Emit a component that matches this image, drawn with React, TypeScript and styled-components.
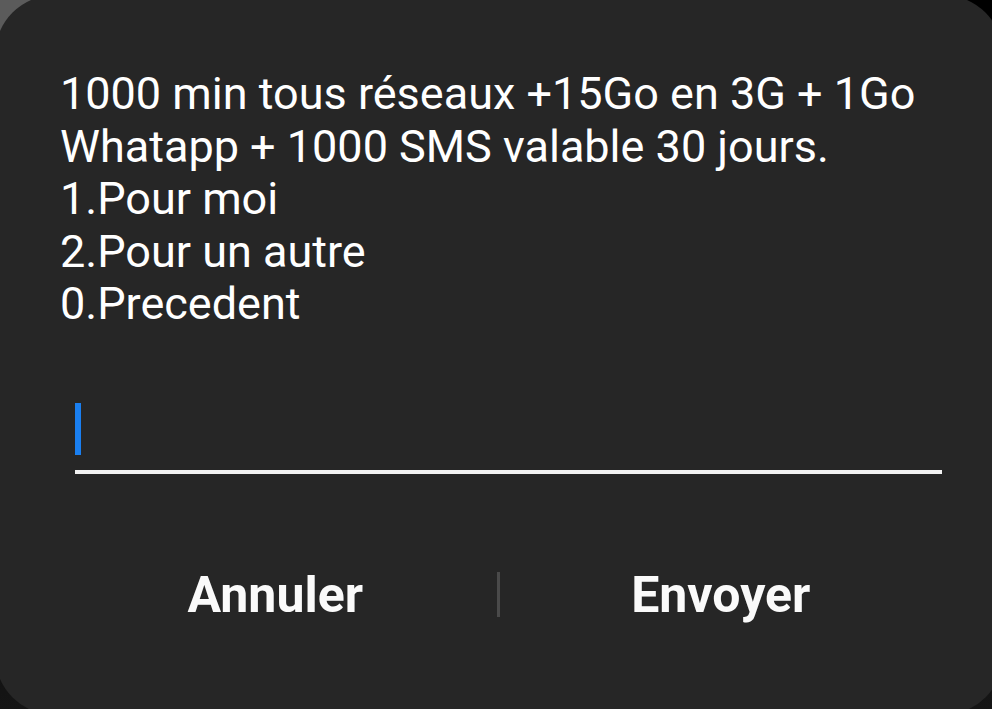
import React from "react";
import styled, { createGlobalStyle } from "styled-components";

const Global = createGlobalStyle`
  html, body {
    margin: 0;
    padding: 0;
    width: 100%;
    height: 100%;
    overflow: hidden;
  }
  body {
    background:
      radial-gradient(circle at 0 0, #5b5b5b 0, #5b5b5b 60px, transparent 61px),
      linear-gradient(to bottom, #000 0%, #000 50%, #151515 100%);
    font-family: Roboto, "Noto Sans", "Liberation Sans", sans-serif;
  }
`;

const Screen = styled.div`
  width: 992px;
  height: 709px;
  position: relative;
  overflow: hidden;
`;

const Dialog = styled.div`
  margin: -5px 0 0 -5px;
  width: 1008px;
  height: 720px;
  box-sizing: border-box;
  background: #262626;
  border-radius: 60px;
  padding: 73px 61px 0 65px;
  display: flex;
  flex-direction: column;
`;

const Message = styled.div`
  color: #ffffff;
  font-size: 45px;
  line-height: 52.5px;
  font-weight: 400;
  white-space: pre-line;
`;

const InputRow = styled.div`
  margin: 61px 0 0 15px;
  height: 67px;
  border-bottom: 4px solid #f2f2f2;
  display: flex;
  align-items: flex-start;
  padding-top: 11px;
  box-sizing: content-box;
`;

const Caret = styled.div`
  width: 6px;
  height: 52px;
  background: #1a7ff0;
`;

const Buttons = styled.div`
  margin-top: 95px;
  display: flex;
  align-items: center;
  margin-left: -6px;
`;

const ActionButton = styled.button`
  flex: 1;
  background: none;
  border: none;
  color: #fafafa;
  font-family: Roboto, "Noto Sans", "Liberation Sans", sans-serif;
  font-weight: 700;
  font-size: 50px;
  line-height: 52px;
  padding: 0;
  text-align: center;
`;

const Divider = styled.div`
  width: 3px;
  height: 45px;
  background: #4a4a4a;
`;

export default function App() {
  return (
    <Screen>
      <Global />
      <Dialog>
        <Message>
          {"1000 min tous réseaux +15Go en 3G + 1Go\nWhatapp + 1000 SMS valable 30 jours.\n1.Pour moi\n2.Pour un autre\n0.Precedent"}
        </Message>
        <InputRow>
          <Caret />
        </InputRow>
        <Buttons>
          <ActionButton>Annuler</ActionButton>
          <Divider />
          <ActionButton>Envoyer</ActionButton>
        </Buttons>
      </Dialog>
    </Screen>
  );
}
